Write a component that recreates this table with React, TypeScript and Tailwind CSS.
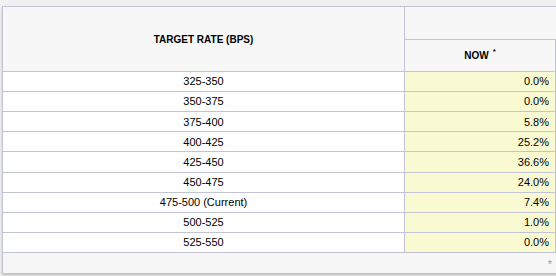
const rows = [
  { range: "325-350", now: "0.0%" },
  { range: "350-375", now: "0.0%" },
  { range: "375-400", now: "5.8%" },
  { range: "400-425", now: "25.2%" },
  { range: "425-450", now: "36.6%" },
  { range: "450-475", now: "24.0%" },
  { range: "475-500 (Current)", now: "7.4%" },
  { range: "500-525", now: "1.0%" },
  { range: "525-550", now: "0.0%" },
];

export default function App() {
  return (
    <div className="w-[556px] h-[276px] overflow-hidden bg-[#f1f1f1] pt-[6px] pl-[2px] font-['Liberation_Sans',Arial,sans-serif] text-black">
      <div className="w-[620px] border border-[#c3c3d6] bg-white shadow-[0_2px_3px_rgba(0,0,0,0.18)]">
        {/* header */}
        <div className="flex h-[65px] border-b border-[#c3c3d6] bg-[#f7f7f7]">
          <div className="w-[402px] shrink-0 border-r border-[#c3c3d6] flex items-center justify-center text-[10px] font-bold">
            TARGET RATE (BPS)
          </div>
          <div className="flex-1 flex flex-col">
            <div className="h-[33px] border-b border-[#c3c3d6]" />
            <div className="flex flex-1">
              <div className="w-[151px] border-r border-[#c3c3d6] flex items-center justify-center text-[10px] font-bold">
                NOW
                <span className="ml-[4px] -mt-[8px] text-[8px]">*</span>
              </div>
            </div>
          </div>
        </div>

        {rows.map((r) => (
          <div key={r.range} className="flex h-[20.12px] border-b border-[#c3c3d6] text-[11px]">
            <div className="w-[402px] shrink-0 border-r border-[#c3c3d6] flex items-center justify-center">
              {r.range}
            </div>
            <div className="w-[151px] shrink-0 border-r border-[#c3c3d6] bg-[#fafad2] flex items-center justify-end pr-[6px]">
              {r.now}
            </div>
          </div>
        ))}

        {/* footer */}
        <div className="flex h-[20px] bg-[#f6f6f6]">
          <div className="w-[553px] shrink-0 flex items-center justify-end pr-[4px] pt-[3px] text-[11px] text-[#9a9a9a]">
            *
          </div>
          <div className="w-[2px] h-[9px] mt-[5px] bg-[#f5c48a]" />
        </div>
      </div>
    </div>
  );
}
